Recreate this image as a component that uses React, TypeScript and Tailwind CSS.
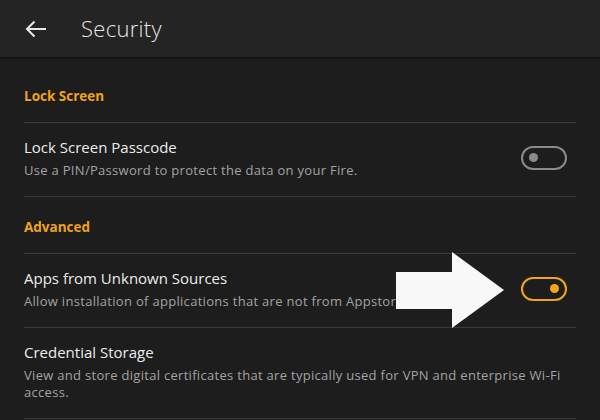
import React from "react";

const font = { fontFamily: '"Open Sans", "Noto Sans", sans-serif' };

const Toggle: React.FC<{ on?: boolean }> = ({ on }) => (
  <div
    className={`w-[46px] h-[24px] mr-[9px] rounded-full border-2 flex items-center px-[6px] shrink-0 ${
      on ? "border-[#f5a417] justify-end" : "border-[#8a8a8a] justify-start"
    }`}
  >
    <div className={`w-[9px] h-[9px] rounded-full ${on ? "bg-[#f5a417]" : "bg-[#8a8a8a]"}`} />
  </div>
);

const SectionTitle: React.FC<{ children: React.ReactNode; first?: boolean }> = ({ children, first }) => (
  <div
    className={`h-[57px] pt-[5px] flex items-center border-b border-[#3a3a3a] text-[13.5px] font-bold text-[#f0a21a] ${
      first ? "mt-[9px]" : ""
    }`}
  >
    {children}
  </div>
);

const Row: React.FC<{ title: string; desc: string; toggle?: boolean; on?: boolean }> = ({ title, desc, toggle, on }) => (
  <div className="flex items-center border-b border-[#3a3a3a] pt-[13px] pb-[17px]">
    <div className="flex-1 min-w-0">
      <div className="text-[15px] leading-[22px] text-[#ececec]">{title}</div>
      <div className="text-[13px] leading-[17px] tracking-[0.3px] text-[#a3a3a3] mt-[4px] pr-[10px]">{desc}</div>
    </div>
    {toggle && <Toggle on={on} />}
  </div>
);

export default function App() {
  return (
    <div className="w-[600px] h-[420px] bg-[#1d1d1d] overflow-hidden relative" style={font}>
      <header className="h-[57px] bg-[#242424] flex items-center shadow-[0_1px_2px_rgba(0,0,0,0.5)]">
        <svg width="22" height="18" viewBox="0 0 22 18" className="ml-[25px]">
          <path d="M21 9H2M9.5 1.5L2 9l7.5 7.5" fill="none" stroke="#e8e8e8" strokeWidth="2" />
        </svg>
        <h1 className="ml-[34px] text-[22px] font-light text-[#e6e6e6] tracking-[0.3px]">Security</h1>
      </header>
      <div className="px-[24px]">
        <SectionTitle first>Lock Screen</SectionTitle>
        <Row title="Lock Screen Passcode" desc="Use a PIN/Password to protect the data on your Fire." toggle />
        <SectionTitle>Advanced</SectionTitle>
        <Row
          title="Apps from Unknown Sources"
          desc="Allow installation of applications that are not from Appstore."
          toggle
          on
        />
        <Row
          title="Credential Storage"
          desc="View and store digital certificates that are typically used for VPN and enterprise Wi-Fi access."
        />
      </div>
      <svg
        className="absolute left-[396px] top-[252px]"
        width="110"
        height="77"
        viewBox="0 0 110 77"
      >
        <path d="M0 20H56V0L108 38L56 76V57H0Z" fill="#f8f8f8" />
      </svg>
    </div>
  );
}
